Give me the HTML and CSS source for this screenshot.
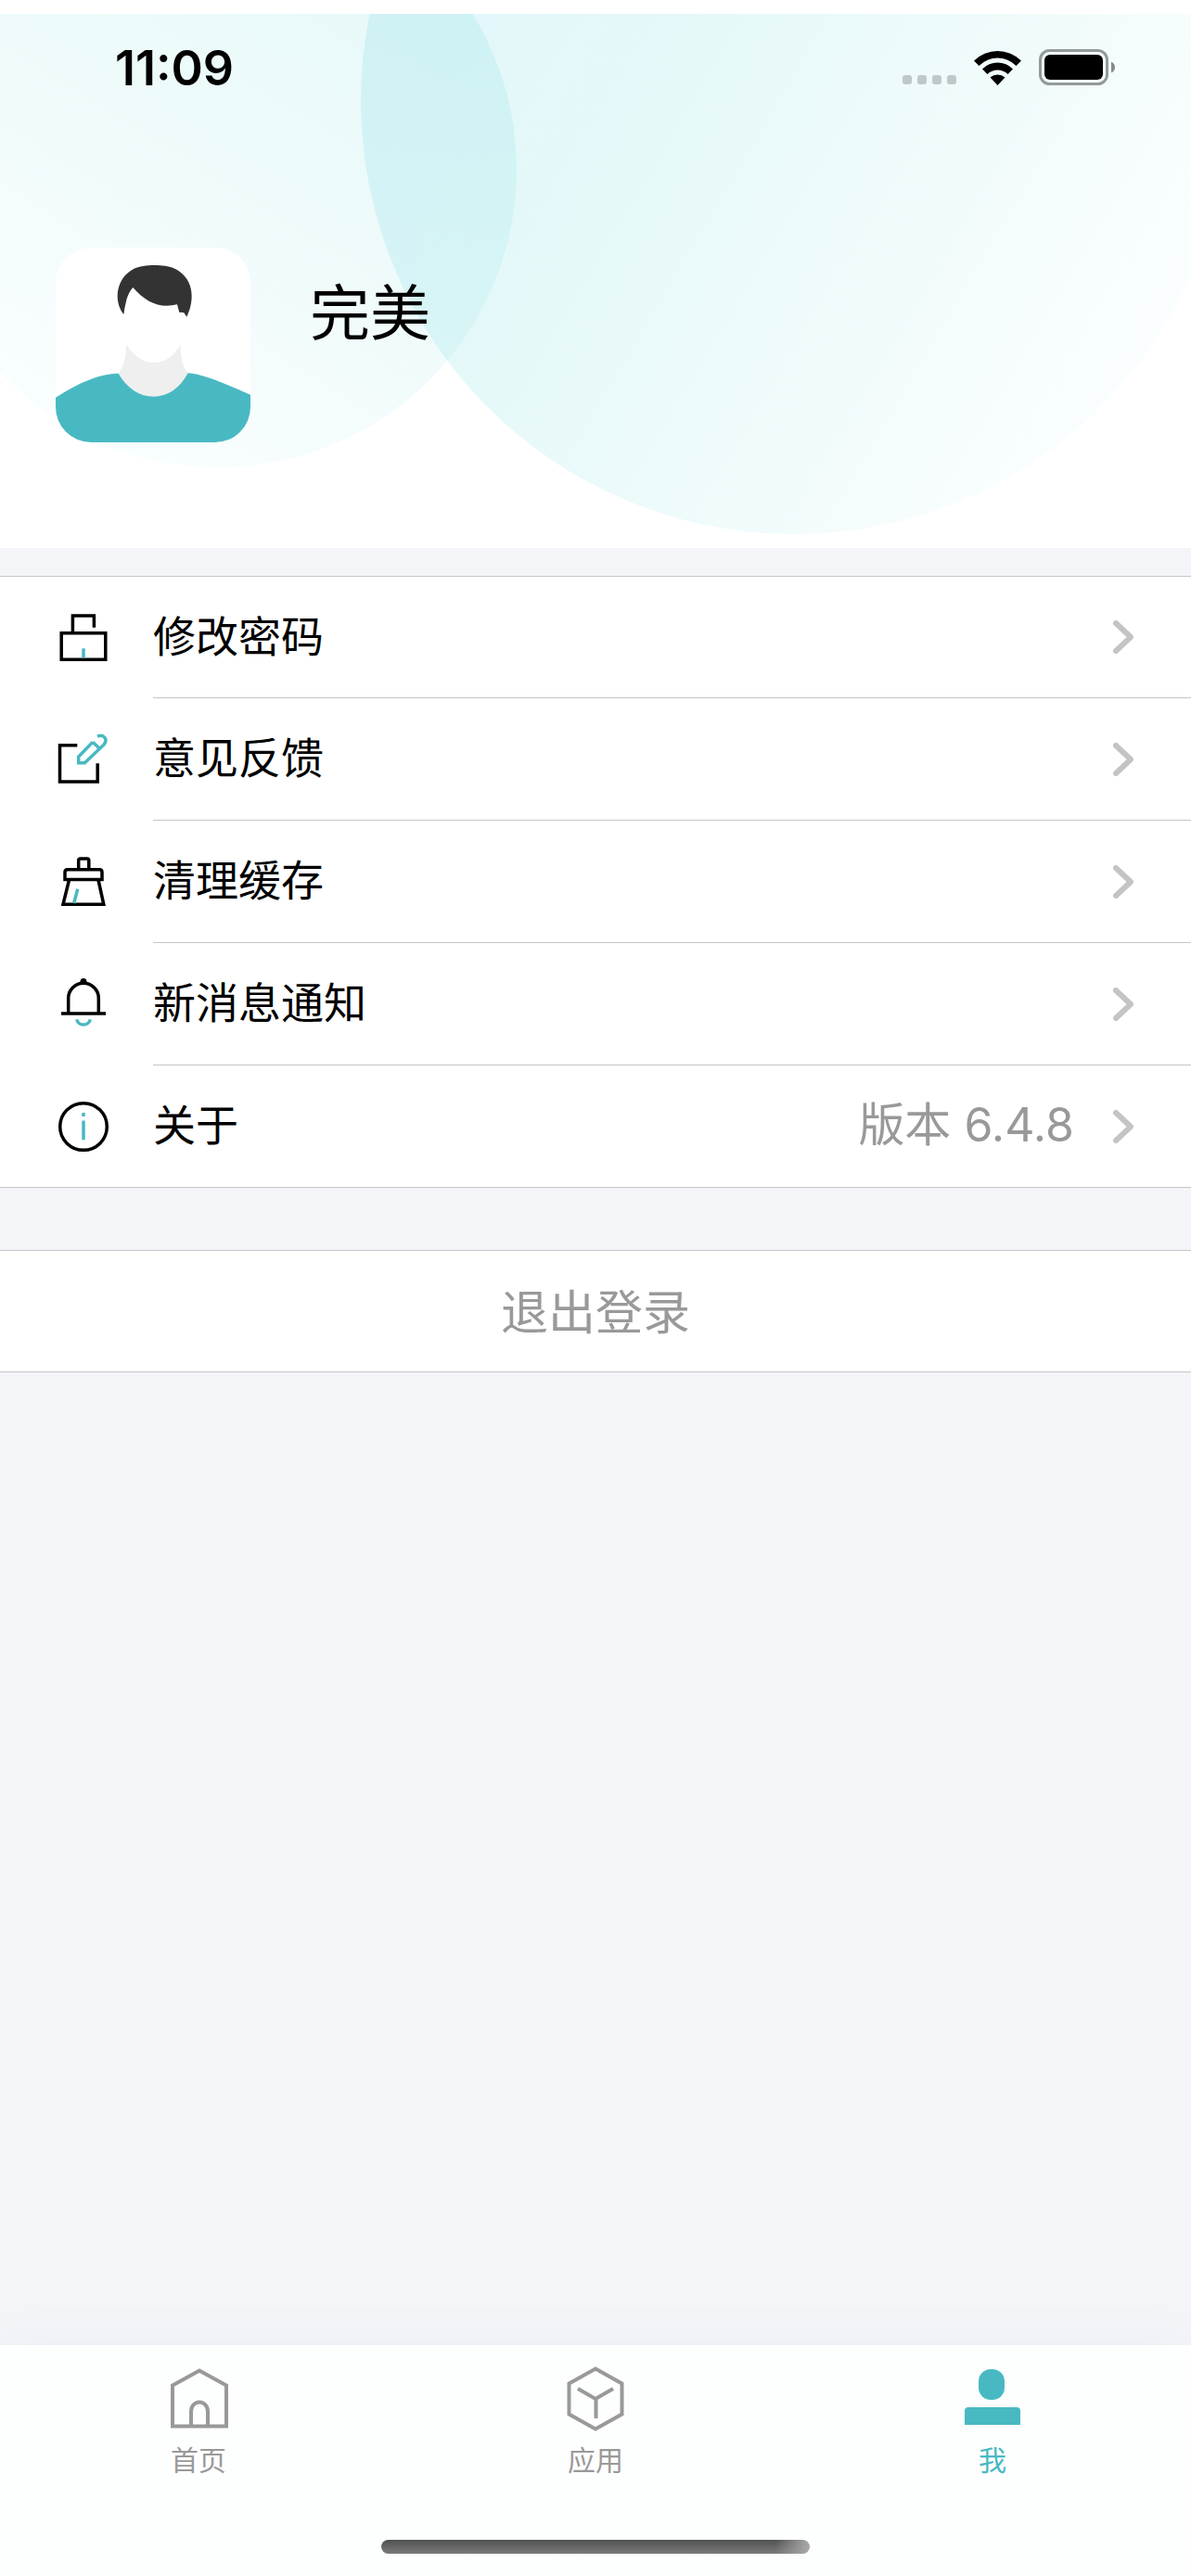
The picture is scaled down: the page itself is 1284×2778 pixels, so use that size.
FILE: index.html
```html
<!DOCTYPE html>
<html lang="zh-CN">
<head>
  <meta charset="UTF-8">
  <title>我</title>
  <meta name="viewport" content="width=device-width, initial-scale=1.0">
  <link rel="stylesheet" href="styles.css">
</head>
<body>

  <header class="header">
    <!-- Background circles -->
    <svg class="header-bg" viewBox="0 0 1284 576" preserveAspectRatio="xMinYMin slice" aria-hidden="true">
      <defs>
        <linearGradient id="smallCircle" gradientUnits="userSpaceOnUse" x1="480" y1="0" x2="180" y2="480">
          <stop offset="0" stop-color="#48cfcb" stop-opacity="0.13"/>
          <stop offset="0.5" stop-color="#70d8dc" stop-opacity="0.11"/>
          <stop offset="1" stop-color="#a0e8f0" stop-opacity="0.07"/>
        </linearGradient>
        <linearGradient id="bigCircle" gradientUnits="userSpaceOnUse" x1="460" y1="60" x2="1200" y2="500">
          <stop offset="0" stop-color="#48cce0" stop-opacity="0.155"/>
          <stop offset="0.3" stop-color="#48d0d0" stop-opacity="0.135"/>
          <stop offset="0.65" stop-color="#68d4dc" stop-opacity="0.09"/>
          <stop offset="1" stop-color="#a0e8e8" stop-opacity="0.04"/>
        </linearGradient>
      </defs>
      <circle cx="236" cy="168" r="321" fill="url(#smallCircle)"/>
      <circle cx="856" cy="94" r="467" fill="url(#bigCircle)"/>
    </svg>

    <div class="status-bar">
      <span class="time">11:09</span>
      <div class="status-icons">
        <svg width="58" height="12" viewBox="0 0 58 12" fill="#bfc8c9">
          <rect width="10" height="10" rx="3"/>
          <rect x="16" width="10" height="10" rx="3"/>
          <rect x="32" width="10" height="10" rx="3"/>
          <rect x="48" width="10" height="10" rx="3"/>
        </svg>
        <svg width="51" height="39" viewBox="0 0 51 39">
          <path d="M0 11.500A36 36 0 0 1 51 11.500L45.500 17A28 28 0 0 0 5.500 17Z"/>
          <path d="M9 20.500A23 23 0 0 1 42 20.500L36.500 26A15.500 15.500 0 0 0 14.500 26Z"/>
          <path d="M17.500 29.500A12 12 0 0 1 33.500 29.500L25.500 38Z"/>
        </svg>
        <svg width="83" height="40" viewBox="0 0 83 40">
          <rect x="1.500" y="1.500" width="72" height="36" rx="10" fill="none" stroke="#939a9b" stroke-width="3"/>
          <rect x="6" y="6" width="63" height="27" rx="6"/>
          <path d="M78 13.500Q82 15.500 82 19.500T78 25.500Z" fill="#858a8b"/>
        </svg>
      </div>
    </div>

    <div class="profile">
      <svg class="avatar" viewBox="60 81 630 630" role="img" aria-label="头像">
        <rect x="60" y="81" width="630" height="630" fill="#fff"/>
        <path fill="#333" d="M280 297C248 258 252 182 312 150C344 134 412 135 440 147C504 174 514 244 484 305L475 292Q467 289 460 291L453 265C396 279 352 258 310 210C290 232 286 262 280 297Z"/>
        <path fill="#efefef" d="M288 394C316 436 345 453 378 453C412 453 440 436 464 394C464 440 470 465 490 490L440 570H310L262 490C282 460 288 440 288 394Z"/>
        <path fill="#48b9c2" d="M60 566C140 515 205 488 263 488C290 537 334 563 376 563C422 563 462 537 488 487C530 488 610 522 690 557V711H60Z"/>
      </svg>
      <h1 class="name">完美</h1>
    </div>
  </header>

  <main class="content">
    <ul class="menu">
      <li>
        <a class="menu-item" href="#password">
          <svg class="menu-icon" viewBox="0 0 56 56">
            <path d="M4.200 22.700H51.800V51.300H4.200ZM16.400 22V4H39.400V16.700"/>
            <path class="accent" d="M28 39.300V49.500"/>
          </svg>
          <span class="menu-row">修改密码
            <svg class="chevron" viewBox="0 0 22 36"><path d="M3 3L19 18L3 33"/></svg>
          </span>
        </a>
      </li>
      <li>
        <a class="menu-item" href="#feedback">
          <svg class="menu-icon" viewBox="0 0 56 56">
            <path d="M21.300 12.800H2.500V52H43.200V32.300"/>
            <path class="accent" d="M38 9.300L22.700 25V31.700H29.300L49.500 12.500C55 7 50 0 43 3.200M38 9.300L45 16"/>
          </svg>
          <span class="menu-row">意见反馈
            <svg class="chevron" viewBox="0 0 22 36"><path d="M3 3L19 18L3 33"/></svg>
          </span>
        </a>
      </li>
      <li>
        <a class="menu-item" href="#cache">
          <svg class="menu-icon" viewBox="0 0 56 56">
            <path d="M22.700 14V5Q22.700 3 24.700 3H31.800Q33.800 3 33.800 5V14M8 25.500V17.500Q8 14.700 10.800 14.700H45.200Q48 14.700 48 17.500V25.500ZM12.500 26L6 52.300H49.800L44 26"/>
            <path class="accent" d="M21.700 35.700L17.700 51"/>
          </svg>
          <span class="menu-row">清理缓存
            <svg class="chevron" viewBox="0 0 22 36"><path d="M3 3L19 18L3 33"/></svg>
          </span>
        </a>
      </li>
      <li>
        <a class="menu-item" href="#notice">
          <svg class="menu-icon" viewBox="0 0 56 56">
            <path d="M4 38H52M11.700 38V21.500A16.300 16.300 0 0 1 44.300 21.500V38"/>
            <circle class="dot" cx="28" cy="3.500" r="3.500"/>
            <path class="accent" d="M20.700 44.300A7.500 7.500 0 0 0 35.300 44.300"/>
          </svg>
          <span class="menu-row">新消息通知
            <svg class="chevron" viewBox="0 0 22 36"><path d="M3 3L19 18L3 33"/></svg>
          </span>
        </a>
      </li>
      <li>
        <a class="menu-item" href="#about">
          <svg class="menu-icon" viewBox="0 0 56 56">
            <circle cx="28" cy="28" r="25.300"/>
            <path class="accent" d="M28 13V17M28 21.500V42.300"/>
          </svg>
          <span class="menu-row">关于
            <span class="version">版本 6.4.8</span>
            <svg class="chevron" viewBox="0 0 22 36"><path d="M3 3L19 18L3 33"/></svg>
          </span>
        </a>
      </li>
    </ul>

    <button class="logout" type="button">退出登录</button>
  </main>

  <footer class="footer">
    <nav class="tabs">
      <a class="tab" href="#home">
        <svg class="tab-icon" viewBox="0 0 72 72">
          <path d="M8 65.500V21.500L37 5.500L66 21.500V65.500ZM28 65V49.500A9 10 0 0 1 46 49.500V65"/>
        </svg>
        首页
      </a>
      <a class="tab" href="#apps">
        <svg class="tab-icon" viewBox="0 0 72 72">
          <path d="M36 3.500L64.500 19.500V52.500L36 68.500L7.500 52.500V19.500ZM17 25L36 36L55 25M36.500 36V57"/>
        </svg>
        应用
      </a>
      <a class="tab active" href="#me">
        <svg class="tab-icon" viewBox="0 0 72 72">
          <rect x="21" y="4" width="28" height="33" rx="13"/>
          <path d="M6 64V49Q6 45 10 45H62Q66 45 66 49V64Z"/>
        </svg>
        我
      </a>
    </nav>
    <div class="home-indicator"></div>
  </footer>

</body>
</html>
```
FILE: styles.css
```css
:root {
  --bg: #f4f5f8;
  --line: #c6c6c8;
  --accent: #48b9c2;
  --gray: #999;
}

* {
  box-sizing: border-box;
}

body {
  margin: 0;
  min-height: 100vh;
  display: flex;
  flex-direction: column;
  font-family: Inter, "Noto Sans CJK SC", sans-serif;
  background: var(--bg);
  color: #000;
}

a {
  color: inherit;
  text-decoration: none;
}

/* Header */
.header {
  position: relative;
  border-top: 15px solid #fff;
  background: #fff;
  overflow: hidden;
}

.header-bg {
  position: absolute;
  top: 0;
  left: 0;
  width: 100%;
  height: 100%;
}

.status-bar {
  position: relative;
  display: flex;
  align-items: center;
  justify-content: space-between;
  height: 116px;
  padding: 0 81px 0 124px;
}

.time {
  font-size: 52px;
  font-weight: 600;
}

.status-icons {
  display: flex;
  align-items: flex-end;
  gap: 19px;
}

.profile {
  position: relative;
  display: flex;
  gap: 64px;
  padding: 136px 60px 114px;
}

.avatar {
  width: 210px;
  height: 210px;
  border-radius: 38px;
}

.name {
  margin: 20px 0 0;
  font-size: 65px;
  font-weight: 400;
  line-height: 102px;
}

/* Menu */
.content {
  flex: 1;
}

.menu {
  margin: 30px 0 67px;
  padding: 0;
  list-style: none;
  background: #fff;
  border-bottom: 1px solid var(--line);
}

.menu li:first-child {
  border-top: 1px solid var(--line);
}

.menu-item {
  display: flex;
  align-items: center;
  gap: 47px;
  padding-left: 62px;
}

.menu-icon {
  width: 56px;
  height: 56px;
  fill: none;
  stroke: #000;
  stroke-width: 3.5;
}

.menu-icon .accent {
  stroke: var(--accent);
}

.menu-icon .dot {
  fill: #000;
  stroke: none;
}

.menu-row {
  flex: 1;
  display: flex;
  align-items: flex-start;
  height: 132px;
  padding-right: 62px;
  border-bottom: 1px solid var(--line);
  font-size: 46px;
  line-height: 129px;
}

.menu li:first-child .menu-row,
.menu li:last-child .menu-row {
  height: 131px;
}

.menu li:last-child .menu-row {
  border-bottom: none;
}

.version {
  margin-left: auto;
  font-size: 50px;
  color: var(--gray);
}

.chevron {
  width: 22px;
  height: 36px;
  margin-left: auto;
  align-self: center;
  fill: none;
  stroke: #c4c4c7;
  stroke-width: 6;
  stroke-linecap: round;
  stroke-linejoin: round;
}

.version + .chevron {
  margin-left: 42px;
}

.logout {
  display: block;
  width: 100%;
  height: 132px;
  padding: 0 0 4px;
  border: solid var(--line);
  border-width: 1px 0;
  background: #fff;
  color: var(--gray);
  font-family: inherit;
  font-size: 51px;
}

/* Bottom tabs */
.footer {
  padding: 22px 0 24px;
  background: #fdfefe;
  box-shadow: 0 0 48px #e9eef6;
}

.tabs {
  display: grid;
  grid-template-columns: repeat(3, 1fr);
}

.tab {
  display: flex;
  flex-direction: column;
  align-items: center;
  gap: 8px;
  font-size: 30px;
  line-height: 44px;
  color: var(--gray);
}

.tab.active {
  color: var(--accent);
}

.tab-icon {
  width: 72px;
  height: 72px;
  fill: none;
  stroke: #999;
  stroke-width: 4;
}

.active .tab-icon {
  fill: var(--accent);
  stroke: none;
}

.home-indicator {
  width: 36%;
  height: 15px;
  margin: 64px auto 0;
  border-radius: 8px;
  background: linear-gradient(to right, transparent 92%, #aaa), linear-gradient(#4f5150, #7b7b7b);
}
```
